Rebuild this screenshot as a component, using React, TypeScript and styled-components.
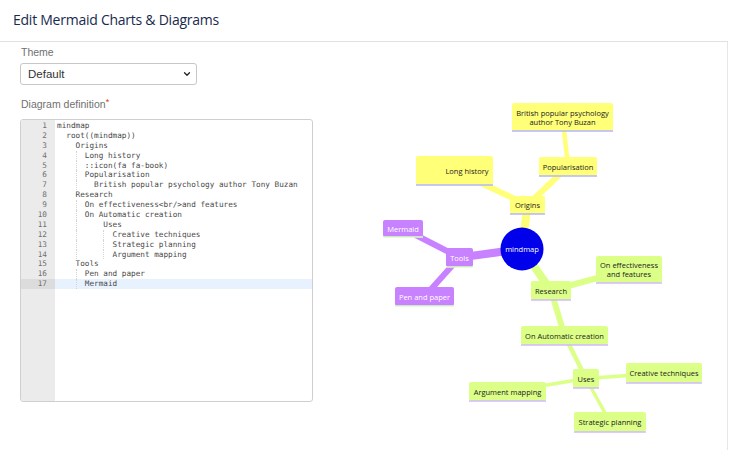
import React from "react";
import styled, { createGlobalStyle } from "styled-components";
import { ChevronDown } from "lucide-react";

const GlobalStyle = createGlobalStyle`
  html, body {
    margin: 0;
    padding: 0;
    background: #ffffff;
  }
  body {
    font-family: "Liberation Sans", Arial, sans-serif;
  }
`;

const Page = styled.div`
  width: 728px;
  min-height: 450px;
  box-sizing: border-box;
`;

const Header = styled.div`
  height: 41px;
  display: flex;
  align-items: center;
  padding-left: 13px;
  border-bottom: 1px solid #e1e1e1;
  box-sizing: content-box;
`;

const Title = styled.h1`
  margin: 0;
  font-family: "Open Sans", sans-serif;
  font-size: 14px;
  font-weight: 500;
  color: #172b4d;
  letter-spacing: -0.25px;
  position: relative;
  top: -1px;
`;

const Body = styled.div`
  display: flex;
  border-right: 1px solid #e6e6e6;
  min-height: 408px;
`;

const FormColumn = styled.div`
  width: 293px;
  padding: 3px 0 0 20px;
  display: flex;
  flex-direction: column;
`;

const Label = styled.div<{ $gap?: number }>`
  font-size: 10.5px;
  line-height: 14px;
  color: #707070;
  padding-left: 1px;
  margin-top: ${(p) => p.$gap ?? 0}px;
`;

const Required = styled.span`
  color: #de350b;
  font-size: 9px;
  vertical-align: top;
  position: relative;
  top: -2px;
`;

const SelectWrap = styled.div`
  position: relative;
  width: 177px;
  margin-top: 4px;
`;

const Select = styled.select`
  appearance: none;
  width: 100%;
  height: 22px;
  border: 1px solid #c8c8c8;
  border-radius: 3px;
  background: #fff;
  padding: 0 0 0 7px;
  font-family: "Liberation Sans", Arial, sans-serif;
  font-size: 11.5px;
  color: #333;
`;

const SelectChevron = styled(ChevronDown)`
  position: absolute;
  right: 5px;
  top: 6px;
  pointer-events: none;
`;

const Editor = styled.div`
  margin-top: 8px;
  height: 283px;
  border: 1px solid #cfcfcf;
  border-radius: 3px;
  display: flex;
  overflow: hidden;
  box-sizing: border-box;
`;

const Gutter = styled.div`
  width: 34px;
  background: #ebebeb;
  padding-top: 1px;
  display: flex;
  flex-direction: column;
`;

const LineNumber = styled.div<{ $active?: boolean }>`
  height: 9.9px;
  line-height: 9.9px;
  padding-right: 8px;
  text-align: right;
  font-family: "DejaVu Sans Mono", monospace;
  font-size: 7.7px;
  color: #707070;
  background: ${(p) => (p.$active ? "#dcdcdc" : "transparent")};
`;

const Code = styled.div`
  flex: 1;
  padding-top: 1px;
  display: flex;
  flex-direction: column;
`;

const CodeLine = styled.div<{ $indent: number; $active?: boolean }>`
  position: relative;
  height: 9.9px;
  line-height: 9.9px;
  padding-left: calc(2px + ${(p) => p.$indent}ch);
  font-family: "DejaVu Sans Mono", monospace;
  font-size: 7.7px;
  color: #4a4a4a;
  white-space: pre;
  background: ${(p) => (p.$active ? "#e8f2ff" : "transparent")};
`;

const Guide = styled.span<{ $col: number }>`
  position: absolute;
  top: 0;
  bottom: 0;
  left: calc(2px + ${(p) => p.$col}ch);
  border-left: 1px dotted #d4d4d4;
`;

const DiagramColumn = styled.div`
  flex: 1;
  display: flex;
`;

const Diagram = styled.svg`
  display: block;
  font-family: "Open Sans", "DejaVu Sans", sans-serif;
`;

type Line = { text: string; indent: number; guides?: number[] };

const lines: Line[] = [
  { text: "mindmap", indent: 0 },
  { text: "root((mindmap))", indent: 2 },
  { text: "Origins", indent: 4 },
  { text: "Long history", indent: 6, guides: [4] },
  { text: "::icon(fa fa-book)", indent: 6, guides: [4] },
  { text: "Popularisation", indent: 6, guides: [4] },
  { text: "British popular psychology author Tony Buzan", indent: 8, guides: [4] },
  { text: "Research", indent: 4 },
  { text: "On effectiveness<br/>and features", indent: 6, guides: [4] },
  { text: "On Automatic creation", indent: 6, guides: [4] },
  { text: "Uses", indent: 10, guides: [4] },
  { text: "Creative techniques", indent: 12, guides: [4, 10] },
  { text: "Strategic planning", indent: 12, guides: [4, 10] },
  { text: "Argument mapping", indent: 12, guides: [4, 10] },
  { text: "Tools", indent: 4 },
  { text: "Pen and paper", indent: 6, guides: [4] },
  { text: "Mermaid", indent: 6, guides: [4] },
];

const ACTIVE_LINE = 17;

type Section = { fill: string; edge: string; under: string; ink: string };

const yellow: Section = { fill: "#ffff78", edge: "#ffff78", under: "#b4b4ff", ink: "#222" };
const green: Section = { fill: "#dcff88", edge: "#dcff88", under: "#d2b8ff", ink: "#222" };
const purple: Section = { fill: "#c882ff", edge: "#c882ff", under: "#d8ffc0", ink: "#fff" };

type MapNode = {
  id: string;
  label: string[];
  x: number;
  y: number;
  w: number;
  h: number;
  s: Section;
  textX?: number;
};

const nodes: MapNode[] = [
  { id: "origins", label: ["Origins"], x: 510, y: 196, w: 35, h: 18, s: yellow },
  { id: "long", label: ["Long history"], x: 416, y: 156, w: 77, h: 29, s: yellow, textX: 467 },
  { id: "pop", label: ["Popularisation"], x: 539, y: 157, w: 58, h: 19, s: yellow },
  { id: "british", label: ["British popular psychology", "author Tony Buzan"], x: 512, y: 103, w: 101, h: 28, s: yellow },
  { id: "tools", label: ["Tools"], x: 446, y: 248, w: 27, h: 19, s: purple },
  { id: "mermaid", label: ["Mermaid"], x: 383, y: 220, w: 40, h: 17, s: purple },
  { id: "pen", label: ["Pen and paper"], x: 395, y: 287, w: 59, h: 19, s: purple },
  { id: "research", label: ["Research"], x: 531, y: 281, w: 40, h: 19, s: green },
  { id: "effect", label: ["On effectiveness", "and features"], x: 596, y: 256, w: 66, h: 27, s: green },
  { id: "auto", label: ["On Automatic creation"], x: 521, y: 326, w: 87, h: 19, s: green },
  { id: "uses", label: ["Uses"], x: 573, y: 369, w: 26, h: 19, s: green },
  { id: "creative", label: ["Creative techniques"], x: 626, y: 363, w: 76, h: 20, s: green },
  { id: "argument", label: ["Argument mapping"], x: 469, y: 382, w: 77, h: 19, s: green },
  { id: "strategic", label: ["Strategic planning"], x: 574, y: 412, w: 72, h: 20, s: green },
];

const ROOT = { x: 522, y: 249, r: 21.5 };

const center = (id: string) => {
  if (id === "root") return { x: ROOT.x, y: ROOT.y };
  const n = nodes.find((m) => m.id === id)!;
  return { x: n.x + n.w / 2, y: n.y + n.h / 2 };
};

const edges: { from: string; to: string; width: number; color: string }[] = [
  { from: "root", to: "origins", width: 8, color: yellow.edge },
  { from: "origins", to: "long", width: 6, color: yellow.edge },
  { from: "origins", to: "pop", width: 6, color: yellow.edge },
  { from: "pop", to: "british", width: 4.5, color: yellow.edge },
  { from: "root", to: "tools", width: 8, color: purple.edge },
  { from: "tools", to: "mermaid", width: 6, color: purple.edge },
  { from: "tools", to: "pen", width: 6, color: purple.edge },
  { from: "root", to: "research", width: 8, color: green.edge },
  { from: "research", to: "effect", width: 6, color: green.edge },
  { from: "research", to: "auto", width: 6, color: green.edge },
  { from: "auto", to: "uses", width: 4.5, color: green.edge },
  { from: "uses", to: "creative", width: 3.5, color: green.edge },
  { from: "uses", to: "argument", width: 3.5, color: green.edge },
  { from: "uses", to: "strategic", width: 3.5, color: green.edge },
];

const NodeBox = ({ n }: { n: MapNode }) => {
  const cx = n.textX ?? n.x + n.w / 2;
  const lineH = 9;
  const top = n.y + n.h / 2 - ((n.label.length - 1) * lineH) / 2;
  return (
    <g>
      <rect x={n.x} y={n.y} width={n.w} height={n.h} rx={2} fill={n.s.fill} />
      <line x1={n.x} y1={n.y + n.h} x2={n.x + n.w} y2={n.y + n.h} stroke={n.s.under} strokeWidth={1.5} />
      {n.label.map((t, i) => (
        <text
          key={t}
          x={cx}
          y={top + i * lineH}
          textAnchor="middle"
          dominantBaseline="central"
          fontSize={7.5}
          fill={n.s.ink}
        >
          {t}
        </text>
      ))}
    </g>
  );
};

const MindMap = () => (
  <Diagram width={414} height={408} viewBox="313 42 414 408">
    {edges.map((e) => {
      const a = center(e.from);
      const b = center(e.to);
      return (
        <line
          key={e.from + e.to}
          x1={a.x}
          y1={a.y}
          x2={b.x}
          y2={b.y}
          stroke={e.color}
          strokeWidth={e.width}
        />
      );
    })}
    {nodes.map((n) => (
      <NodeBox key={n.id} n={n} />
    ))}
    <circle cx={ROOT.x} cy={ROOT.y} r={ROOT.r} fill="#0000ea" />
    <text
      x={ROOT.x}
      y={ROOT.y}
      textAnchor="middle"
      dominantBaseline="central"
      fontSize={7.5}
      fontWeight={500}
      fill="#fff"
    >
      mindmap
    </text>
  </Diagram>
);

const App = () => {
  return (
    <>
      <GlobalStyle />
      <Page>
        <Header>
          <Title>Edit Mermaid Charts &amp; Diagrams</Title>
        </Header>
        <Body>
          <FormColumn>
            <Label>Theme</Label>
            <SelectWrap>
              <Select defaultValue="default">
                <option value="default">Default</option>
                <option value="dark">Dark</option>
                <option value="forest">Forest</option>
                <option value="neutral">Neutral</option>
              </Select>
              <SelectChevron size={10} strokeWidth={3} color="#222" />
            </SelectWrap>
            <Label $gap={12}>
              Diagram definition<Required>*</Required>
            </Label>
            <Editor>
              <Gutter>
                {lines.map((_, i) => (
                  <LineNumber key={i} $active={i + 1 === ACTIVE_LINE}>
                    {i + 1}
                  </LineNumber>
                ))}
              </Gutter>
              <Code>
                {lines.map((l, i) => (
                  <CodeLine key={i} $indent={l.indent} $active={i + 1 === ACTIVE_LINE}>
                    {l.guides?.map((g) => (
                      <Guide key={g} $col={g} />
                    ))}
                    {l.text}
                  </CodeLine>
                ))}
              </Code>
            </Editor>
          </FormColumn>
          <DiagramColumn>
            <MindMap />
          </DiagramColumn>
        </Body>
      </Page>
    </>
  );
};

export default App;
